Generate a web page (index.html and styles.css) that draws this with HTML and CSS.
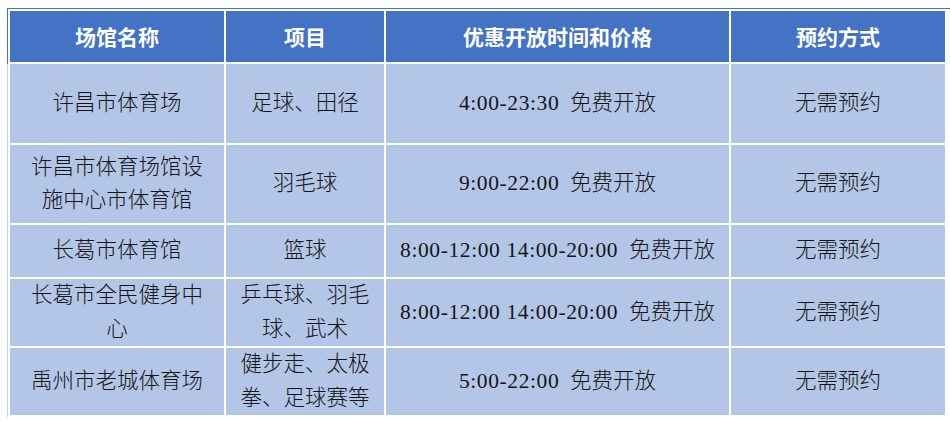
FILE: index.html
```html
<!DOCTYPE html>
<html lang="zh-CN">
<head>
<meta charset="utf-8">
<title>场馆优惠开放</title>
<link rel="stylesheet" href="styles.css">
</head>
<body>
<div class="frame">
  <table class="venues">
    <colgroup>
      <col class="c1"><col class="c2"><col class="c3"><col class="c4">
    </colgroup>
    <thead>
      <tr class="head">
        <th>场馆名称</th>
        <th>项目</th>
        <th>优惠开放时间和价格</th>
        <th>预约方式</th>
      </tr>
    </thead>
    <tbody>
      <tr class="r1">
        <td>许昌市体育场</td>
        <td>足球、田径</td>
        <td class="time"><span class="t">4:00-23:30</span>&nbsp; 免费开放</td>
        <td>无需预约</td>
      </tr>
      <tr class="r2">
        <td>许昌市体育场馆设施中心市体育馆</td>
        <td>羽毛球</td>
        <td class="time"><span class="t">9:00-22:00</span>&nbsp; 免费开放</td>
        <td>无需预约</td>
      </tr>
      <tr class="r3">
        <td>长葛市体育馆</td>
        <td>篮球</td>
        <td class="time"><span class="t">8:00-12:00 14:00-20:00</span>&nbsp; 免费开放</td>
        <td>无需预约</td>
      </tr>
      <tr class="r4">
        <td>长葛市全民健身中心</td>
        <td>乒乓球、羽毛球、武术</td>
        <td class="time"><span class="t">8:00-12:00 14:00-20:00</span>&nbsp; 免费开放</td>
        <td>无需预约</td>
      </tr>
      <tr class="r5">
        <td>禹州市老城体育场</td>
        <td>健步走、太极拳、足球赛等</td>
        <td class="time"><span class="t">5:00-22:00</span>&nbsp; 免费开放</td>
        <td>无需预约</td>
      </tr>
    </tbody>
  </table>
</div>
</body>
</html>
```

FILE: styles.css
```css
html, body {
  margin: 0;
  padding: 0;
  background: #ffffff;
}

.frame {
  margin: 8px 0 0 7px;
  border-top: 1px solid #4472c4;
  padding-left: 1px;
  background:
    linear-gradient(#4472c4, #4472c4) 0 0 / 1px 55px no-repeat,
    linear-gradient(#c5d0ea, #c5d0ea) 0 0 / 1px 100% no-repeat;
}

.venues {
  width: 939px;
  table-layout: fixed;
  border-collapse: separate;
  border-spacing: 2px;
  font-family: "Liberation Serif", "Noto Sans CJK SC", serif;
  font-size: 21.5px;
  color: #151515;
}

.c1 { width: 214px; }
.c2 { width: 158px; }
.c3 { width: 343px; }
.c4 { width: 214px; }

.venues th,
.venues td {
  padding: 0 13px;
  text-align: center;
  vertical-align: middle;
  line-height: 33.5px;
}

.venues th {
  background: #4472c4;
  color: #ffffff;
  font-family: "Noto Sans CJK SC", sans-serif;
  font-weight: 700;
  font-size: 21px;
}

.venues td {
  background: #b4c6e7;
  font-weight: 300;
}

.venues td.time {
  padding: 0;
  white-space: nowrap;
}

.t {
  letter-spacing: 0.6px;
}

.head { height: 51px; }
.r1 { height: 79px; }
.r2 { height: 78px; }
.r3 { height: 52px; }
.r4 { height: 67px; }
.r5 { height: 67px; }
```
